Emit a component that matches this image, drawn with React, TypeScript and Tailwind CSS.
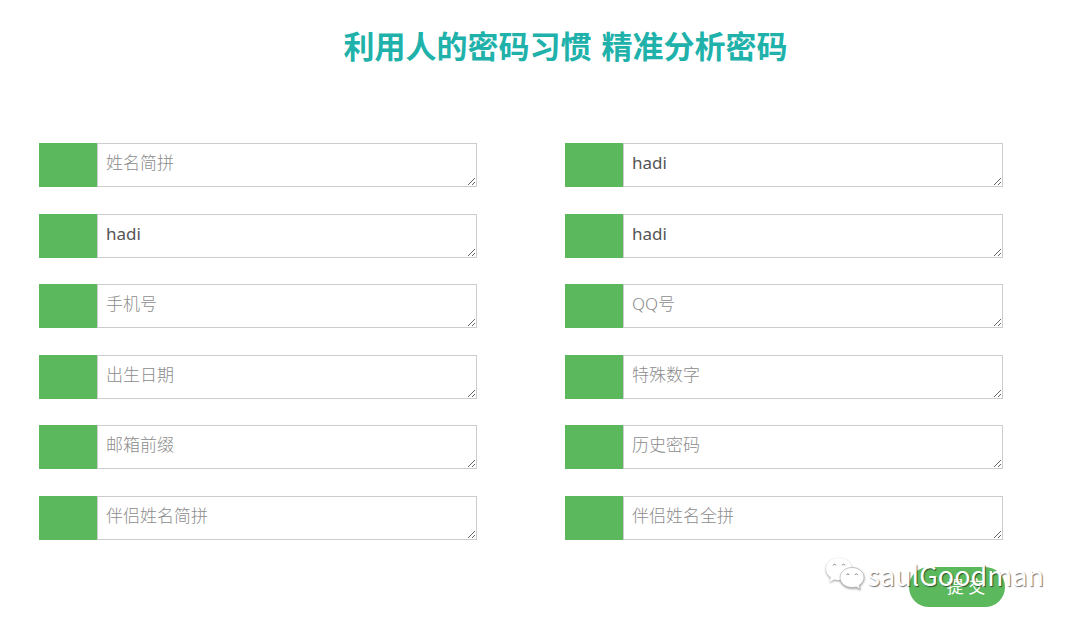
type Field = { id: string; label: string; value?: string };

const fields: Field[] = [
  { id: "name-short", label: "姓名简拼" },
  { id: "name-full", label: "姓名全拼", value: "hadi" },
  { id: "nickname", label: "英文名", value: "hadi" },
  { id: "username", label: "用户名", value: "hadi" },
  { id: "phone", label: "手机号" },
  { id: "qq", label: "QQ号" },
  { id: "birthday", label: "出生日期" },
  { id: "numbers", label: "特殊数字" },
  { id: "email", label: "邮箱前缀" },
  { id: "history", label: "历史密码" },
  { id: "partner-short", label: "伴侣姓名简拼" },
  { id: "partner-full", label: "伴侣姓名全拼" },
];

function FieldRow({ id, label, value }: Field) {
  return (
    <div className="flex h-11">
      <label htmlFor={id} aria-label={label} className="w-[58px] shrink-0 bg-[#5cb85c]" />
      <textarea
        id={id}
        aria-label={label}
        placeholder={label}
        defaultValue={value}
        rows={1}
        className="min-w-0 flex-1 resize overflow-hidden border border-[#ccc] bg-white px-2 py-[7px] text-[17px] leading-6 font-normal text-[#555] outline-none placeholder:font-light placeholder:text-[#8c8c8c]"
      />
    </div>
  );
}

function Watermark() {
  return (
    <div className="pointer-events-none absolute right-9 -top-[10px] flex items-start gap-0.5">
      <svg
        viewBox="0 0 40 34"
        className="h-[34px] w-10 [filter:drop-shadow(0px_1px_1px_rgba(0,0,0,0.4))]"
        fill="#fff"
      >
        <path d="M14 1C6.800 1 1 5.900 1 12c0 3.500 1.900 6.500 4.900 8.500L4.600 25l5-2.600c1.400.4 2.900.6 4.400.6 7.200 0 13-4.900 13-11S21.200 1 14 1Z" />
        <path
          d="M27 10.500c-6.600 0-12 4.500-12 10s5.400 10 12 10c1.400 0 2.800-.2 4.100-.6l4.200 2.300-1.200-3.900c3-1.800 4.900-4.600 4.900-7.800 0-5.500-5.400-10-12-10Z"
          stroke="#aaa"
          strokeWidth=".7"
        />
        <path
          d="M8 8.500c.4-1.700 2.600-1.700 3 0M17 8.500c.4-1.700 2.600-1.700 3 0M21.500 18c.4-1.500 2.400-1.500 2.800 0M30 18c.4-1.500 2.400-1.500 2.800 0"
          fill="none"
          stroke="#888"
          strokeWidth="1"
        />
      </svg>
      <span className="font-['Noto_Sans_CJK_SC',sans-serif] text-[27px] leading-9 font-normal text-white [text-shadow:1px_1px_1px_rgba(0,0,0,0.55)]">
        saulGoodman
      </span>
    </div>
  );
}

export default function App() {
  return (
    <main className="min-h-screen bg-white font-['Noto_Sans','Noto_Sans_CJK_SC',sans-serif]">
      <h1 className="flex justify-center gap-[10px] pt-6 pl-[51px] font-['Noto_Sans_CJK_SC',sans-serif] text-[31px] leading-[42px] font-bold text-[#20b2aa]">
        <span>利用人的密码习惯</span>
        <span>精准分析密码</span>
      </h1>
      <form onSubmit={(e) => e.preventDefault()}>
        <div className="mt-[77px] grid h-[397px] grid-cols-2 content-between gap-x-[88px] pr-[77px] pl-[39px]">
          {fields.map((f) => (
            <FieldRow key={f.id} {...f} />
          ))}
        </div>
        <div className="relative mt-[27px] flex justify-end pr-[75px]">
          <button
            type="submit"
            className="h-10 w-24 rounded-full bg-[#5cb85c] pl-[18px] text-[17px] leading-6 text-white"
          >
            提 交
          </button>
          <Watermark />
        </div>
      </form>
    </main>
  );
}
